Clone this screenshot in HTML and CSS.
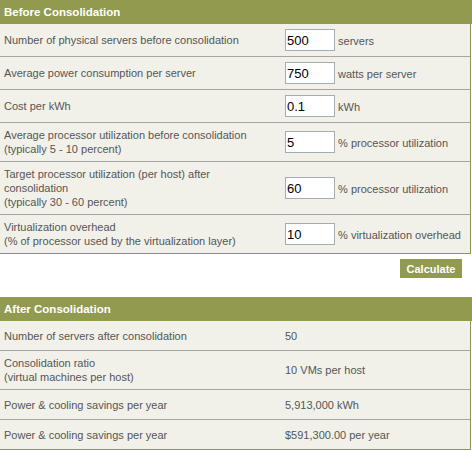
FILE: index.html
```html
<!DOCTYPE html>
<html>
<head>
<meta charset="utf-8">
<link rel="stylesheet" href="styles.css">
</head>
<body>
<div class="calc">
  <section class="panel">
    <div class="panel-head">Before Consolidation</div>
    <div class="row">
      <div class="label">Number of physical servers before consolidation</div>
      <div class="field"><input class="num" type="text" value="500"> servers</div>
    </div>
    <div class="row">
      <div class="label">Average power consumption per server</div>
      <div class="field"><input class="num" type="text" value="750"> watts per server</div>
    </div>
    <div class="row">
      <div class="label">Cost per kWh</div>
      <div class="field"><input class="num" type="text" value="0.1"> kWh</div>
    </div>
    <div class="row">
      <div class="label">Average processor utilization before consolidation<br>(typically 5 - 10 percent)</div>
      <div class="field"><input class="num" type="text" value="5"> % processor utilization</div>
    </div>
    <div class="row">
      <div class="label">Target processor utilization (per host) after consolidation<br>(typically 30 - 60 percent)</div>
      <div class="field"><input class="num" type="text" value="60"> % processor utilization</div>
    </div>
    <div class="row">
      <div class="label">Virtualization overhead<br>(% of processor used by the virtualization layer)</div>
      <div class="field"><input class="num" type="text" value="10"> % virtualization overhead</div>
    </div>
  </section>
  <div class="actions"><button class="btn" type="button">Calculate</button></div>
  <section class="panel results">
    <div class="panel-head">After Consolidation</div>
    <div class="row">
      <div class="label">Number of servers after consolidation</div>
      <div class="value">50</div>
    </div>
    <div class="row">
      <div class="label">Consolidation ratio<br>(virtual machines per host)</div>
      <div class="value">10 VMs per host</div>
    </div>
    <div class="row">
      <div class="label">Power &amp; cooling savings per year</div>
      <div class="value">5,913,000 kWh</div>
    </div>
    <div class="row">
      <div class="label">Power &amp; cooling savings per year</div>
      <div class="value">$591,300.00 per year</div>
    </div>
  </section>
</div>
</body>
</html>
```
FILE: styles.css
```css
html, body {
  margin: 0;
  padding: 0;
  background: #ffffff;
}
body {
  font-family: "Liberation Sans", Arial, sans-serif;
  font-size: 11px;
  color: #555555;
}
.calc {
  width: 472px;
}
.panel {
  width: 470px;
  border-right: 1px solid #8f9650;
  border-bottom: 1px solid #8f9650;
  background: #f1f1ea;
}
.panel-head {
  width: 472px;
  box-sizing: border-box;
  height: 24px;
  line-height: 24px;
  padding-left: 4px;
  background: #929a4f;
  color: #ffffff;
  font-weight: bold;
  font-size: 11.5px;
}
.row {
  display: grid;
  grid-template-columns: 283px 1fr;
  align-items: center;
  padding: 5px 0;
  border-bottom: 1px solid #a6a6a0;
  line-height: 14px;
}
.row:last-child {
  border-bottom: none;
}
.label {
  padding-left: 4px;
  padding-right: 22px;
}
.field {
  padding-left: 2px;
  white-space: nowrap;
}
.num {
  width: 50px;
  height: 22px;
  box-sizing: border-box;
  border: 1px solid #a5acb2;
  padding: 0 1px;
  margin: 0;
  font-family: "Liberation Sans", Arial, sans-serif;
  font-size: 13px;
  color: #000000;
  background: #ffffff;
  vertical-align: baseline;
}
.results .row {
  min-height: 19px;
}
.value {
  padding-left: 2px;
}
.actions {
  display: flex;
  justify-content: flex-end;
  padding: 5px 10px 19px 0;
}
.btn {
  width: 62px;
  height: 19px;
  border: none;
  background: #929a4f;
  color: #ffffff;
  font-family: "Liberation Sans", Arial, sans-serif;
  font-weight: bold;
  font-size: 11px;
  padding: 0;
}
```
